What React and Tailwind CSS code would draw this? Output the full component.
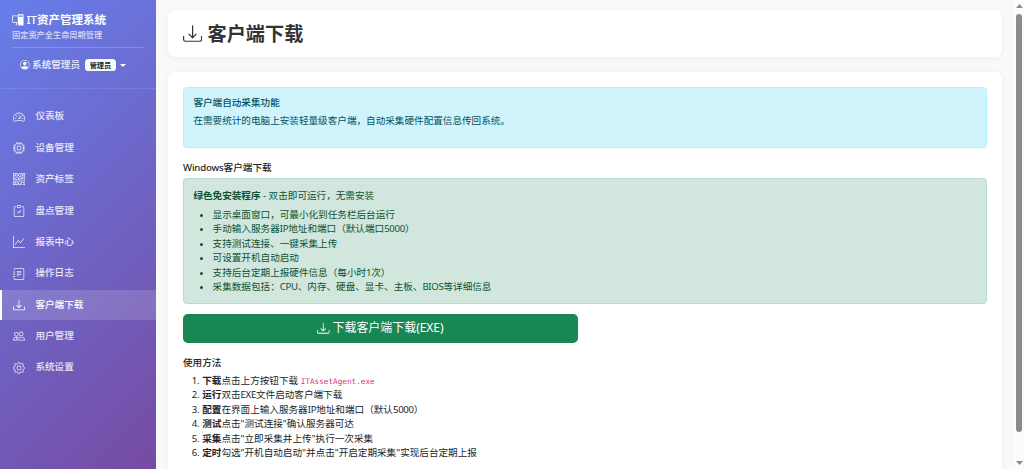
import React from 'react';
import {
  BsPcDisplay,
  BsPersonCircle,
  BsSpeedometer2,
  BsCpu,
  BsQrCode,
  BsClipboardCheck,
  BsGraphUp,
  BsJournalText,
  BsDownload,
  BsPeople,
  BsGear,
} from 'react-icons/bs';

const navItems = [
  { label: '仪表板', Icon: BsSpeedometer2 },
  { label: '设备管理', Icon: BsCpu },
  { label: '资产标签', Icon: BsQrCode },
  { label: '盘点管理', Icon: BsClipboardCheck },
  { label: '报表中心', Icon: BsGraphUp },
  { label: '操作日志', Icon: BsJournalText },
  { label: '客户端下载', Icon: BsDownload, active: true },
  { label: '用户管理', Icon: BsPeople },
  { label: '系统设置', Icon: BsGear },
];

const features = [
  '显示桌面窗口，可最小化到任务栏后台运行',
  '手动输入服务器IP地址和端口（默认端口5000）',
  '支持测试连接、一键采集上传',
  '可设置开机自动启动',
  '支持后台定期上报硬件信息（每小时1次）',
  '采集数据包括：CPU、内存、硬盘、显卡、主板、BIOS等详细信息',
];

const steps = [
  ['下载', '点击上方按钮下载 ', 'ITAssetAgent.exe'],
  ['运行', '双击EXE文件启动客户端下载'],
  ['配置', '在界面上输入服务器IP地址和端口（默认5000）'],
  ['测试', '点击"测试连接"确认服务器可达'],
  ['采集', '点击"立即采集并上传"执行一次采集'],
  ['定时', '勾选"开机自动启动"并点击"开启定期采集"实现后台定期上报'],
];

// Tightens Latin words and numbers set inside Chinese text.
function Mixed({ text }) {
  return text.split(/([A-Za-z0-9]+)/).map((part, i) =>
    i % 2 ? (
      <span key={i} className="tracking-[-0.3px]">
        {part}
      </span>
    ) : (
      part
    )
  );
}

function Sidebar() {
  return (
    <aside className="flex w-[156px] shrink-0 flex-col bg-[linear-gradient(135deg,#667eea_0%,#764ba2_100%)] text-white">
      <div className="h-[88.5px] border-b border-white/10 px-3 pt-[13px]">
        <h1 className="flex h-[14px] items-center gap-[3px] text-[11.5px] font-bold leading-[14px]">
          <BsPcDisplay className="size-[11.5px]" />
          <span>
            <span className="font-medium">IT</span>资产管理系统
          </span>
        </h1>
        <p className="mt-px h-[13px] text-[8.2px] font-medium leading-[13px] text-white/75">固定资产全生命周期管理</p>
        <div className="mt-[6px] h-px bg-white/20" />
        <div className="mt-[9px] flex h-[16px] items-center pl-[8px] text-[9.6px] font-medium text-white/90">
          <BsPersonCircle className="size-[9.6px]" />
          <span className="ml-[2.5px]">系统管理员</span>
          <span className="ml-[5px] flex h-[12px] items-center rounded-[3.6px] bg-[#f8f9fa] px-[4.6px] text-[7.2px] font-bold text-[#212529]">
            管理员
          </span>
          <span className="ml-[4.5px] h-0 w-0 border-x-[3px] border-t-[3px] border-x-transparent border-t-white" />
        </div>
      </div>
      <nav className="flex flex-col gap-[1.2px] pt-[13.1px]">
        {navItems.map(({ label, Icon, active }) => (
          <a
            key={label}
            className={
              active
                ? 'flex h-[30.2px] items-center border-l-2 border-white bg-white/15 pl-[11px] text-[9.6px] font-medium text-white'
                : 'flex h-[30.2px] items-center border-l-2 border-transparent pl-[11px] text-[9.6px] font-medium text-white/85'
            }
          >
            <Icon className="size-[12px]" />
            <span className="ml-[10.4px]">{label}</span>
          </a>
        ))}
      </nav>
    </aside>
  );
}

function Scrollbar() {
  return (
    <div className="flex w-[10px] shrink-0 flex-col items-center bg-[#fcfcfc]">
      <svg className="mt-[4px] h-[4px] w-[7px]" viewBox="0 0 7 4">
        <path d="M3.5 0L7 4H0z" fill="#8b8b8b" />
      </svg>
      <div className="mt-[6px] h-[417.5px] w-[6px] rounded-full bg-[#8b8b8b]" />
      <svg className="mt-[29.5px] h-[4px] w-[7px]" viewBox="0 0 7 4">
        <path d="M3.5 4L7 0H0z" fill="#8b8b8b" />
      </svg>
    </div>
  );
}

export default function App() {
  return (
    <div className="flex h-[469px] w-full overflow-hidden whitespace-nowrap bg-[#f8f9fa] font-['Noto_Sans','Noto_Sans_CJK_SC',sans-serif] text-[9.6px] leading-[14.4px] text-[#212529]">
      <Sidebar />
      <main className="flex min-w-0 flex-1 flex-col gap-[15px] pl-3 pr-3 pt-[10px]">
        <header className="flex h-[47px] shrink-0 items-center rounded-[7px] bg-white px-[15px] shadow-[0_1px_6px_rgba(0,0,0,0.05)]">
          <BsDownload className="size-[19.2px] text-[#333]" />
          <h2 className="ml-[5.3px] text-[19.2px] font-bold leading-[23px] text-[#333]">客户端下载</h2>
        </header>
        <section className="h-[480px] shrink-0 rounded-[7px] bg-white p-[15px] shadow-[0_1px_6px_rgba(0,0,0,0.05)]">
          <div className="h-[61px] rounded-[3.6px] border border-[#b6effb] bg-[#cff4fc] px-[9.4px] pt-[9.2px] text-[#055160]">
            <h3 className="font-medium leading-[11.5px]">客户端自动采集功能</h3>
            <p className="mt-[5.6px]">在需要统计的电脑上安装轻量级客户端，自动采集硬件配置信息传回系统。</p>
          </div>
          <h3 className="mt-[14px] font-medium leading-[11.5px]">
            <span className="tracking-[-0.15px]">Windows</span>客户端下载
          </h3>
          <div className="mt-[4.7px] h-[125.8px] rounded-[3.6px] border border-[#badbcc] bg-[#d1e7dd] px-[9.4px] pt-[9.9px] text-[#0f5132]">
            <p>
              <strong className="font-bold">绿色免安装程序</strong> - 双击即可运行，无需安装
            </p>
            <ul className="mt-[4.5px] list-disc pl-[19.2px]">
              {features.map((text) => (
                <li key={text}>
                  <Mixed text={text} />
                </li>
              ))}
            </ul>
          </div>
          <button className="mt-[9.6px] flex h-[29px] w-[394.5px] items-center justify-center gap-[3px] rounded-[4.8px] bg-[#198754] text-[12px] text-white">
            <BsDownload className="size-[12.5px]" />
            <span className="relative top-[0.5px] tracking-[-0.05px]">下载客户端下载(EXE)</span>
          </button>
          <h3 className="mt-[14px] font-medium leading-[11.5px]">使用方法</h3>
          <ol className="mt-[6px] list-decimal pl-[19.2px]">
            {steps.map(([name, text, code]) => (
              <li key={name}>
                <strong className="font-bold">{name}</strong>
                <Mixed text={text} />
                {code && (
                  <code className="font-['DejaVu_Sans_Mono','Liberation_Mono',monospace] text-[7.7px] leading-none text-[#d63384]">{code}</code>
                )}
              </li>
            ))}
          </ol>
        </section>
      </main>
      <Scrollbar />
    </div>
  );
}
